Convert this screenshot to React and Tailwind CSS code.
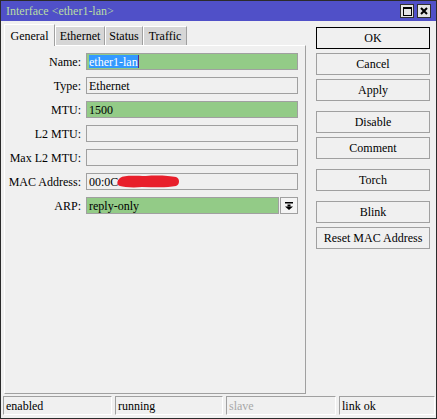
import React from "react";

function Field({ label, green, children, width = "w-[212px]" }) {
  return (
    <div className="flex items-center h-[17px]">
      <div className="w-[76px] text-right pr-0">{label}</div>
      <div
        className={`ml-[5px] ${width} h-[17px] border border-[#a0a0a0] flex items-center pl-[2px] overflow-hidden ${
          green ? "bg-[#93cb87]" : "bg-[#f0f0f0]"
        }`}
      >
        {children}
      </div>
    </div>
  );
}

function Btn({ children, first, gap }) {
  return (
    <div
      className={`h-[22px] flex items-center justify-center border ${
        first ? "border-black" : "border-[#a0a0a0]"
      } ${gap} bg-[#f0f0f0]`}
    >
      {children}
    </div>
  );
}

function Tab({ label, selected, w }) {
  if (selected) {
    return (
      <div
        className={`${w} h-[22px] -mb-px relative z-10 bg-[#f0f0f0] border-l border-t border-r border-l-white border-t-white border-r-[#a0a0a0] flex items-center justify-center`}
      >
        {label}
      </div>
    );
  }
  return (
    <div
      className={`${w} h-[19px] bg-[#d6d6d6] border-l border-t border-r border-l-white border-t-white border-r-[#a0a0a0] flex items-center justify-center`}
    >
      {label}
    </div>
  );
}

function Cell({ children, w, muted }) {
  return (
    <div
      className={`${w} h-[19px] border-t border-l border-b border-r border-t-[#a0a0a0] border-l-[#a0a0a0] border-b-white border-r-white flex items-center pl-[2px] ${
        muted ? "text-[#a8a8a8]" : "text-black"
      }`}
    >
      {children}
    </div>
  );
}

export default function App() {
  return (
    <div className="w-[437px] h-[419px] bg-[#f0f0f0] border border-[#2b2b2b] flex flex-col text-[12px] leading-none text-black [font-family:'Liberation_Serif',serif]">
      {/* Title bar */}
      <div className="h-[20px] bg-[#5050c8] flex items-center pl-[5px] pr-[5px]">
        <div className="text-[#b8dca4] text-[12px] flex-1">Interface &lt;ether1-lan&gt;</div>
        <div className="flex gap-[3px]">
          <div className="w-[14px] h-[14px] bg-[#e4e4e4] border border-[#303030] flex items-center justify-center">
            <svg width="9" height="9" viewBox="0 0 9 9">
              <rect x="0.5" y="0.5" width="8" height="8" fill="none" stroke="#000" strokeWidth="1" />
              <rect x="0" y="0" width="9" height="2" fill="#000" />
            </svg>
          </div>
          <div className="w-[14px] h-[14px] bg-[#e4e4e4] border border-[#303030] flex items-center justify-center">
            <svg width="8" height="8" viewBox="0 0 8 8">
              <path d="M1 1 L7 7 M7 1 L1 7" stroke="#000" strokeWidth="2" />
            </svg>
          </div>
        </div>
      </div>

      {/* Body */}
      <div className="h-[373px] flex">
        {/* Left column */}
        <div className="w-[305px] pl-[3px] pt-[3px] flex flex-col">
          <div className="h-[21px] flex items-end">
            <Tab label="General" selected w="w-[51px]" />
            <Tab label="Ethernet" w="w-[50px]" />
            <Tab label="Status" w="w-[38px]" />
            <Tab label="Traffic" w="w-[44px]" />
          </div>
          <div className="h-[349px] border border-t-white border-l-white border-r-[#a0a0a0] border-b-[#a0a0a0] pt-[7px] flex flex-col gap-[7px]">
            <Field label="Name:" green>
              <span className="bg-[#3399ff] text-white h-[13px] flex items-center">ether1-lan</span>
              <span className="w-px h-[13px] bg-[#5b2a86]" />
            </Field>
            <Field label="Type:">Ethernet</Field>
            <Field label="MTU:" green>1500</Field>
            <Field label="L2 MTU:"></Field>
            <Field label="Max L2 MTU:"></Field>
            <Field label="MAC Address:">
              <span>00:0C</span>
              <svg width="64" height="15" viewBox="0 0 64 15" className="-ml-[2px]">
                <path
                  d="M4 4 C8 1, 18 2, 30 2 C42 1, 54 2, 60 3 C64 4, 64 11, 60 12 C50 14, 38 13, 26 13 C16 14, 8 13, 4 12 C0 11, 1 6, 4 4 Z"
                  fill="#e81f2b"
                />
              </svg>
            </Field>
            <div className="flex items-center h-[17px]">
              <div className="w-[76px] text-right">ARP:</div>
              <div className="ml-[5px] w-[193px] h-[17px] border border-[#a0a0a0] bg-[#93cb87] flex items-center pl-[2px]">
                reply-only
              </div>
              <div className="ml-[1px] w-[18px] h-[17px] border border-[#a0a0a0] bg-[#f4f4f4] flex items-center justify-center">
                <svg width="8" height="8" viewBox="0 0 8 8">
                  <rect x="0" y="0" width="8" height="1.5" fill="#000" />
                  <rect x="2.5" y="2.5" width="3" height="2" fill="#000" />
                  <polygon points="0,4.5 8,4.5 4,8" fill="#000" />
                </svg>
              </div>
            </div>
          </div>
        </div>

        {/* Right column */}
        <div className="ml-[10px] w-[114px] pt-[6px] flex flex-col">
          <Btn first gap="">OK</Btn>
          <Btn gap="mt-[4px]">Cancel</Btn>
          <Btn gap="mt-[4px]">Apply</Btn>
          <Btn gap="mt-[10px]">Disable</Btn>
          <Btn gap="mt-[4px]">Comment</Btn>
          <Btn gap="mt-[10px]">Torch</Btn>
          <Btn gap="mt-[10px]">Blink</Btn>
          <Btn gap="mt-[4px]">Reset MAC Address</Btn>
        </div>
      </div>

      {/* Status bar */}
      <div className="h-[24px] pl-[2px] pt-[2px] flex gap-[3px]">
        <Cell w="w-[109px]">enabled</Cell>
        <Cell w="w-[108px]">running</Cell>
        <Cell w="w-[110px]" muted>slave</Cell>
        <Cell w="w-[96px]">link ok</Cell>
      </div>
    </div>
  );
}
